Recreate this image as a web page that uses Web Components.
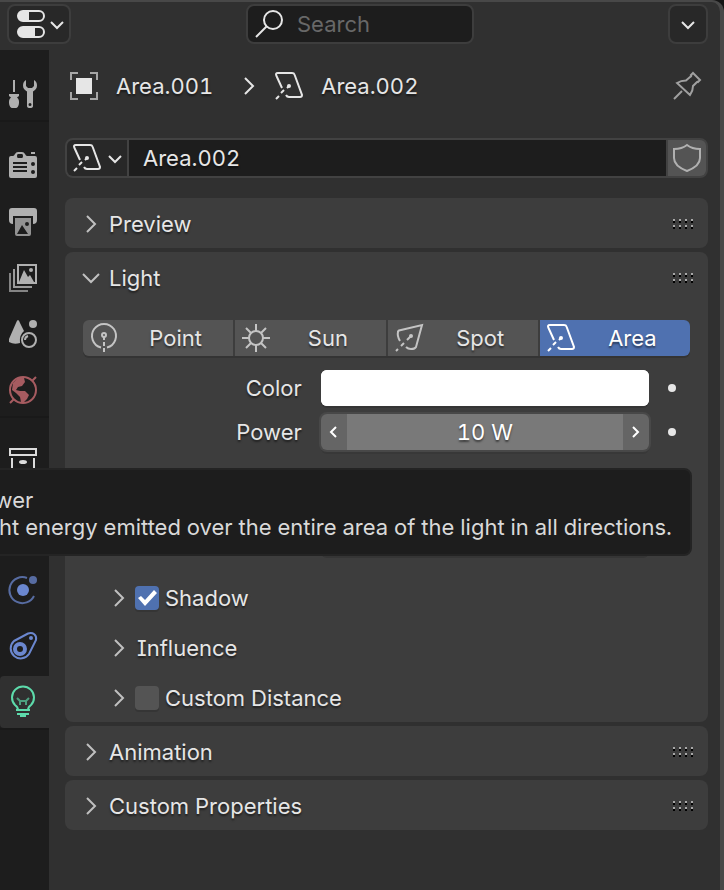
<!DOCTYPE html>
<html lang="en">
<head>
<meta charset="utf-8">
<meta name="viewport" content="width=device-width, initial-scale=1">
<title>Properties</title>
<style>
    :root {
        --back: #303030;
        --dark: #1d1d1d;
        --panel: #3d3d3d;
        --widget: #545454;
        --menu: #282828;
        --text: #e6e6e6;
        --accent: #4f71b0;
    }

    body {
        margin: 0;
        background: #151515;
        color: var(--text);
        font: 22px/28px Inter, "Liberation Sans", sans-serif;
        font-feature-settings: "tnum", "cv08";
        text-shadow: 0 2px 2px rgba(0, 0, 0, 0.5);
    }
</style>
</head>
<body>

<properties-editor>
    <editor-header slot="header"></editor-header>

    <tab-group slot="tabs">
        <editor-tab icon="tool" label="Tool"></editor-tab>
    </tab-group>
    <tab-group slot="tabs">
        <editor-tab icon="render" label="Render"></editor-tab>
        <editor-tab icon="output" label="Output"></editor-tab>
        <editor-tab icon="layers" label="View Layer"></editor-tab>
        <editor-tab icon="scene" label="Scene"></editor-tab>
        <editor-tab icon="world" label="World"></editor-tab>
    </tab-group>
    <tab-group slot="tabs">
        <editor-tab icon="collection" label="Collection"></editor-tab>
    </tab-group>
    <tab-group slot="tabs">
        <editor-tab icon="object" label="Object"></editor-tab>
        <editor-tab icon="physics" label="Physics"></editor-tab>
        <editor-tab icon="constraint" label="Constraints"></editor-tab>
        <editor-tab icon="bulb" label="Data" active></editor-tab>
    </tab-group>

    <context-path></context-path>
    <data-block value="Area.002"></data-block>

    <panel-list>
        <fold-panel heading="Preview"></fold-panel>
        <fold-panel heading="Light" open>
            <light-types>
                <light-type icon="point">Point</light-type>
                <light-type icon="sun">Sun</light-type>
                <light-type icon="spot">Spot</light-type>
                <light-type icon="area" active>Area</light-type>
            </light-types>
            <property-row label="Color" type="color" value="#ffffff"></property-row>
            <property-row label="Power" type="number" value="10 W"></property-row>
            <property-row type="covered"></property-row>
            <sub-panel check="on">Shadow</sub-panel>
            <sub-panel>Influence</sub-panel>
            <sub-panel check="off">Custom Distance</sub-panel>
        </fold-panel>
        <fold-panel heading="Animation"></fold-panel>
        <fold-panel heading="Custom Properties"></fold-panel>
    </panel-list>

    <tool-tip slot="overlay">
        <span slot="name">Power</span>
        Light energy emitted over the entire area of the light in all directions.
    </tool-tip>
</properties-editor>

<script>
// Icons are drawn on a 28px grid with currentColor
const ICONS = {
    editor: `<path d="M6 0h16a6 6 0 0 1 0 12H6A6 6 0 0 1 6 0zM12 2v8h10q4 0 4-4t-4-4z" fill="currentColor" fill-rule="evenodd" stroke="none"/>
        <path d="M6 16h16a6 6 0 0 1 0 12H6a6 6 0 0 1 0-12zM18 18v8h4q4 0 4-4t-4-4z" fill="currentColor" fill-rule="evenodd" stroke="none"/>`,
    search: `<circle cx="18" cy="10" r="9"/><path d="M11.500 16.500L1 27"/>`,
    tool: `<g fill="currentColor" stroke="none"><path d="M4 0h2v12H4zM0 14h10v2l-2 1.500c2 2 2 3 2 5.500 0 3-2 5-3 5H3c-1 0-3-2-3-5 0-2.500 0-3.500 2-5.500L0 16z"/>
        <path fill-rule="evenodd" d="M17 0v6l2 2h4l2-2V0c2 1 3 3 3 5.500 0 3-1.500 4.500-4 6V26q0 2-3 2t-3-2V11.500c-2.500-1.500-4-3-4-6C14 3 15 1 17 0zM21 23a1.500 1.500 0 1 0 0 3 1.500 1.500 0 0 0 0-3z"/></g>`,
    render: `<path fill="currentColor" stroke="none" fill-rule="evenodd" d="M2 4h2q1 0 2-2 1-2 3-2h4q2 0 3 2 1 2 2 2h8q2 0 2 2v18q0 2-2 2H2q-2 0-2-2V6q0-2 2-2zM9 2q-1 0-1 2t1 2h4q1 0 1-2t-1-2zM4 10v2h14v-2zm0 4v2h14v-2zm0 4v2h14v-2zM24 10a2 2 0 1 0 0 4 2 2 0 0 0 0-4zm0 8a2 2 0 1 0 0 4 2 2 0 0 0 0-4zM22 0h4v2h-4z"/>`,
    output: `<path fill="currentColor" stroke="none" d="M3 0h22q3 0 3 3v9q0 4-4 4V8H4v8q-4 0-4-4V3q0-3 3-3z"/>
        <path fill="currentColor" opacity=".8" stroke="none" fill-rule="evenodd" d="M6 10h16v16q0 2-2 2H8q-2 0-2-2zM8 26h11l-6-9zM18 14a2 2 0 1 0 0 4 2 2 0 0 0 0-4z"/>`,
    layers: `<rect x="9" y="1" width="18" height="18"/><path d="M5 5v18h18" opacity=".85"/><path d="M1 9v18h18" opacity=".7"/>
        <path d="M10 18l5-12 4 7 2-2 4 7z" fill="currentColor" stroke="none"/><circle cx="22" cy="6" r="2" fill="currentColor" stroke="none"/>`,
    scene: `<path d="M9 0q1 0 2 3l4 8q-5 4-4 12-6 2-11-1v-3L7 3q1-3 2-3z" fill="currentColor" stroke="none"/>
        <circle cx="24" cy="4" r="4" fill="currentColor" stroke="none"/><circle cx="20" cy="20" r="7"/><path d="M16 20q0-3 3-4"/>`,
    world: `<circle cx="14" cy="14" r="13"/><path d="M23 5l4-4M5 23l-4 4"/>
        <path d="M4 7l5-5h6l1 4-3 4-4 1-2 3 4 1h5l4 4-2 4-3 3h-3l-1-5-4-4-4-3z" fill="currentColor" stroke="none"/>`,
    collection: `<rect x="1" y="1" width="26" height="6"/><path d="M3 10v16h22V10"/><ellipse cx="14" cy="14" rx="4" ry="2" fill="currentColor" stroke="none"/>`,
    object: `<path d="M1 8V1h7M20 1h7v7M27 20v7h-7M8 27H1v-7" opacity=".65"/><path d="M6 6h16v16H6z" fill="currentColor" stroke="none"/>`,
    physics: `<path d="M18 2A13 13 0 1 0 25 20" opacity=".75"/><circle cx="14" cy="14" r="6" fill="currentColor" stroke="none"/><circle cx="24" cy="4" r="4" fill="currentColor" stroke="none" opacity=".75"/>`,
    constraint: `<path d="M5 9L19 1.500C24 0 28 3 27 8L20 22A10 10 0 1 1 5 9z"/><circle cx="11" cy="17" r="5" stroke-width="4"/><circle cx="22" cy="6" r="2" fill="currentColor" stroke="none"/>`,
    bulb: `<path d="M9 22q0-3-3-5a11 11 0 1 1 16 0q-3 2-3 5M7 22h14M8 26h12M11 28h6"/><path d="M8 10l3 3h6l3-3M11 17v-4M17 17v-4" opacity=".65"/>`,
    area: `<path d="M7 16L1.500 4Q0 1 3 1h14q2 0 2.500 1.500L27 23q0 2-2 2H14q-2 0-3-2M6 21l3-3M1 27l3-3M12 16l2-2"/><circle cx="14" cy="14" r="2" fill="currentColor" stroke="none"/>`,
    point: `<path d="M11 23.500a12 12 0 1 1 6 0"/><circle cx="14" cy="11" r="2"/><path d="M14 13v3M14 18v4M14 24v4"/>`,
    sun: `<circle cx="14" cy="14" r="7"/><path d="M14 7V0M14 21v7M7 14H0M21 14h7M9 9L4 4M19 9l5-5M9 19l-5 5M19 19l5 5"/>`,
    spot: `<path d="M5 17Q2 12 3 8q0-1 1-1.500L27 1l-6 22q-1 2-5 2-3 0-5-2M12 16l4-4M6 22l3-3M1 27l2-2"/><circle cx="16" cy="12" r="2" fill="currentColor" stroke="none"/>`,
    pin: `<path d="M20 1l7 7-2 2q-1-.5-2 1l-3 3q0 5-3 9L4 11q4-2.500 9-2.500L17 5q2-1 1-2zM9 19l-8 8"/>`,
    shield: `<path d="M14 1q-5 4-13 4v9q0 8 13 13 13-5 13-13V5Q19 5 14 1z"/>`,
    down: `<path d="M8 12l6 6 6-6"/>`,
    unfold: `<path d="M6 10l8 8 8-8"/>`,
    right: `<path d="M10 6l8 8-8 8"/>`,
    stepleft: `<path d="M16 9l-5 5 5 5"/>`,
    stepright: `<path d="M11 9l5 5-5 5"/>`
};

// Reset shared by every element that has a button in it
const BUTTON = `
    button { margin: 0; padding: 0; border: 0; background: none; color: inherit; font: inherit; font-feature-settings: inherit; text-shadow: inherit; cursor: pointer; }
`;

class UiIcon extends HTMLElement {
    constructor() {
        super();
        this.attachShadow({ mode: 'open' });
    }

    connectedCallback() {
        this.shadowRoot.innerHTML = `
        <style>
            :host { display: block; flex: none; width: 28px; height: 28px; }
            svg { display: block; overflow: visible; }
        </style>
        <svg width="28" height="28" viewBox="0 0 28 28" fill="none" stroke="currentColor" stroke-width="2" aria-hidden="true">${ICONS[this.getAttribute('name')]}</svg>
        `;
    }
}
customElements.define('ui-icon', UiIcon);

// Whole editor: header on top, tabs on the left, panels on the right
class PropertiesEditor extends HTMLElement {
    constructor() {
        super();
        this.attachShadow({ mode: 'open' });
        this.shadowRoot.innerHTML = `
        <style>
            :host {
                box-sizing: border-box;
                position: relative;
                display: flex;
                flex-direction: column;
                min-height: 100vh;
                overflow: hidden;
                background: var(--back);
                border-top: 2px solid #484848;
                border-right: 4px solid #484848;
                border-top-right-radius: 12px;
            }
            .columns { flex: 1; display: flex; }
            nav {
                flex: none;
                width: 49px;
                display: flex;
                flex-direction: column;
                gap: 20px;
                padding-top: 18px;
                box-sizing: border-box;
                background: var(--dark);
            }
            main { flex: 1; min-width: 0; padding: 16px 12px 16px 16px; }
        </style>
        <slot name="header"></slot>
        <div class="columns">
            <nav><slot name="tabs"></slot></nav>
            <main><slot></slot></main>
        </div>
        <slot name="overlay"></slot>
        `;
    }
}
customElements.define('properties-editor', PropertiesEditor);

class EditorHeader extends HTMLElement {
    constructor() {
        super();
        this.attachShadow({ mode: 'open' });
        this.shadowRoot.innerHTML = `
        <style>
            ${BUTTON}
            :host { display: grid; grid-template-columns: 1fr auto 1fr; padding: 2px 0 6px; }
            button, label {
                box-sizing: border-box;
                height: 40px;
                display: flex;
                align-items: center;
                border: 2px solid var(--panel);
                border-radius: 8px;
                background: var(--menu);
            }
            .editor { justify-self: start; width: 64px; margin-left: 7px; padding-left: 8px; }
            .editor ui-icon + ui-icon { margin-left: -2px; }
            .options { justify-self: end; width: 40px; margin-right: 12px; justify-content: center; }
            label { width: 228px; gap: 14px; padding: 0 7px; background: var(--dark); }
            input {
                min-width: 0;
                flex: 1;
                padding: 0;
                border: 0;
                outline: 0;
                background: none;
                color: inherit;
                font: inherit;
                text-shadow: none;
            }
            input::placeholder { color: #686868; opacity: 1; }
        </style>
        <button class="editor" aria-label="Editor type"><ui-icon name="editor"></ui-icon><ui-icon name="down"></ui-icon></button>
        <label><ui-icon name="search"></ui-icon><input type="text" placeholder="Search" aria-label="Search"></label>
        <button class="options" aria-label="Options"><ui-icon name="down"></ui-icon></button>
        `;
    }
}
customElements.define('editor-header', EditorHeader);

class TabGroup extends HTMLElement {
    constructor() {
        super();
        this.attachShadow({ mode: 'open' });
        this.shadowRoot.innerHTML = `
        <style>
            :host { display: flex; flex-direction: column; gap: 4px; box-shadow: 0 2px 0 #191919; }
        </style>
        <slot></slot>
        `;
    }
}
customElements.define('tab-group', TabGroup);

class EditorTab extends HTMLElement {
    constructor() {
        super();
        this.attachShadow({ mode: 'open' });
    }

    connectedCallback() {
        const icon = this.getAttribute('icon');
        this.shadowRoot.innerHTML = `
        <style>
            ${BUTTON}
            :host { display: block; color: #b0b0b0; }
            :host([icon="world"]) { color: #a65b60; }
            :host([icon="collection"]) { color: #dcdcdc; }
            :host([icon="object"]) { color: #e19658; }
            :host([icon="physics"]), :host([icon="constraint"]) { color: #6b87cf; }
            :host([icon="bulb"]) { color: #5ddbab; }
            :host([active]) { background: var(--back); border-radius: 4px 0 0 4px; }
            button { display: flex; align-items: center; width: 100%; height: 52px; padding-left: 9px; }
        </style>
        <button aria-label="${this.getAttribute('label')}"><ui-icon name="${icon}"></ui-icon></button>
        `;
    }
}
customElements.define('editor-tab', EditorTab);

// Row with the object and its light data, and the pin
class ContextPath extends HTMLElement {
    constructor() {
        super();
        this.attachShadow({ mode: 'open' });
        this.shadowRoot.innerHTML = `
        <style>
            ${BUTTON}
            :host { display: flex; align-items: center; height: 40px; padding: 0 7px 0 5px; }
            span { margin-left: 18px; }
            .arrow { margin: 0 12px 0 22px; }
            button { margin-left: auto; color: #a0a0a0; }
        </style>
        <ui-icon name="object"></ui-icon><span>Area.001</span>
        <ui-icon class="arrow" name="right"></ui-icon>
        <ui-icon name="area"></ui-icon><span>Area.002</span>
        <button aria-label="Pin"><ui-icon name="pin"></ui-icon></button>
        `;
    }
}
customElements.define('context-path', ContextPath);

class DataBlock extends HTMLElement {
    constructor() {
        super();
        this.attachShadow({ mode: 'open' });
    }

    connectedCallback() {
        this.shadowRoot.innerHTML = `
        <style>
            ${BUTTON}
            :host {
                box-sizing: border-box;
                display: flex;
                gap: 2px;
                height: 40px;
                margin: 32px 0 20px;
                border: 2px solid #424242;
                border-radius: 8px;
                background: #424242;
                overflow: hidden;
            }
            button { display: flex; align-items: center; justify-content: center; }
            .browse { flex: none; width: 60px; padding-left: 8px; background: var(--menu); }
            .fake { flex: none; width: 38px; background: var(--widget); color: #b0b0b0; }
            input {
                flex: 1;
                min-width: 0;
                padding: 0 14px;
                border: 0;
                outline: 0;
                background: var(--dark);
                color: inherit;
                font: inherit;
                font-feature-settings: inherit;
                text-shadow: inherit;
            }
        </style>
        <button class="browse" aria-label="Browse data"><ui-icon name="area"></ui-icon><ui-icon name="down"></ui-icon></button>
        <input type="text" value="${this.getAttribute('value')}" aria-label="Name">
        <button class="fake" aria-label="Fake user"><ui-icon name="shield"></ui-icon></button>
        `;
    }
}
customElements.define('data-block', DataBlock);

class PanelList extends HTMLElement {
    constructor() {
        super();
        this.attachShadow({ mode: 'open' });
        this.shadowRoot.innerHTML = `
        <style>
            :host { display: flex; flex-direction: column; gap: 4px; }
        </style>
        <slot></slot>
        `;
    }
}
customElements.define('panel-list', PanelList);

class FoldPanel extends HTMLElement {
    constructor() {
        super();
        this.attachShadow({ mode: 'open' });
    }

    connectedCallback() {
        const open = this.hasAttribute('open');
        this.shadowRoot.innerHTML = `
        <style>
            ${BUTTON}
            :host { display: block; border-radius: 8px; background: var(--panel); }
            button { display: flex; align-items: center; gap: 4px; width: 100%; height: 50px; padding: 2px 13px 0 12px; text-align: left; }
            ui-icon { color: #c0c0c0; }
            span { flex: 1; }
            .body { padding: 18px 18px 0; }
        </style>
        <button aria-expanded="${open}">
            <ui-icon name="${open ? 'unfold' : 'right'}"></ui-icon>
            <span>${this.getAttribute('heading')}</span>
            <drag-dots></drag-dots>
        </button>
        ${open ? '<div class="body"><slot></slot></div>' : ''}
        `;
    }
}
customElements.define('fold-panel', FoldPanel);

// Grip of a panel, light dots with a black shadow under each
class DragDots extends HTMLElement {
    constructor() {
        super();
        this.attachShadow({ mode: 'open' });
        this.shadowRoot.innerHTML = `
        <style>
            :host { display: block; width: 22px; height: 10px; }
            svg { display: block; }
        </style>
        <svg width="22" height="10" viewBox="0 0 22 10" fill="none" stroke-width="2" stroke-dasharray="2 4" aria-hidden="true">
            <path d="M0 1h22M0 7h22" stroke="#a8a8a8"/>
            <path d="M0 3h22M0 9h22" stroke="#000"/>
        </svg>
        `;
    }
}
customElements.define('drag-dots', DragDots);

class LightTypes extends HTMLElement {
    constructor() {
        super();
        this.attachShadow({ mode: 'open' });
        this.shadowRoot.innerHTML = `
        <style>
            :host {
                display: grid;
                grid-template-columns: repeat(4, 1fr);
                gap: 2px;
                margin-bottom: 14px;
                border-radius: 6px;
                overflow: hidden;
                box-shadow: 0 2px 0 #343434;
            }
        </style>
        <slot></slot>
        `;
    }
}
customElements.define('light-types', LightTypes);

class LightType extends HTMLElement {
    constructor() {
        super();
        this.attachShadow({ mode: 'open' });
    }

    connectedCallback() {
        this.shadowRoot.innerHTML = `
        <style>
            ${BUTTON}
            :host { display: block; background: var(--widget); }
            :host([active]) { background: var(--accent); color: #fff; }
            button { display: flex; align-items: center; width: 100%; height: 36px; padding-left: 7px; }
            span { flex: 1; text-align: center; }
            ui-icon { color: #c4c4c4; }
            :host([active]) ui-icon { color: #fff; }
        </style>
        <button aria-pressed="${this.hasAttribute('active')}">
            <ui-icon name="${this.getAttribute('icon')}"></ui-icon><span><slot></slot></span>
        </button>
        `;
    }
}
customElements.define('light-type', LightType);

// Label, field and keyframe dot
class PropertyRow extends HTMLElement {
    constructor() {
        super();
        this.attachShadow({ mode: 'open' });
    }

    field() {
        const value = this.getAttribute('value');
        switch (this.getAttribute('type')) {
            case 'color':
                return `<input id="field" class="color" type="color" value="${value}">`;
            case 'number':
                return `<div class="number">
                    <button aria-label="Decrease"><ui-icon name="stepleft"></ui-icon></button>
                    <input id="field" type="text" value="${value}">
                    <button aria-label="Increase"><ui-icon name="stepright"></ui-icon></button>
                </div>`;
            default:
                return '<div class="plain"></div>';
        }
    }

    connectedCallback() {
        const label = this.getAttribute('label');
        this.shadowRoot.innerHTML = `
        <style>
            ${BUTTON}
            :host {
                display: grid;
                grid-template-columns: minmax(0, 2fr) minmax(0, 3fr) 22px;
                align-items: center;
                column-gap: 19px;
                margin-bottom: 8px;
            }
            :host([type="covered"]) { margin: 70px 0 16px; }
            label { text-align: right; }
            .color, .plain, .number { box-sizing: border-box; width: 100%; height: 36px; border-radius: 6px; box-shadow: 0 2px 0 #353535; }
            .color { display: block; margin: 0; padding: 0; border: 0; background: #fff; overflow: hidden; }
            .color::-webkit-color-swatch-wrapper { padding: 0; }
            .color::-webkit-color-swatch { border: 0; }
            .plain { background: var(--widget); }
            .number { display: flex; overflow: hidden; background: #656565; box-shadow: 0 0 0 2px #484848, 0 4px 0 #383838; color: #fff; }
            .number button { flex: none; display: flex; align-items: center; justify-content: center; width: 26px; }
            .number input {
                flex: 1;
                min-width: 0;
                padding: 0;
                border: 0;
                outline: 0;
                background: #797979;
                color: inherit;
                font: inherit;
                font-feature-settings: inherit;
                text-align: center;
                text-shadow: inherit;
            }
            i { justify-self: start; width: 8px; height: 8px; border-radius: 50%; background: var(--text); }
        </style>
        ${label ? `<label for="field">${label}</label>` : '<span></span>'}
        ${this.field()}
        ${label ? '<i></i>' : ''}
        `;
    }
}
customElements.define('property-row', PropertyRow);

class SubPanel extends HTMLElement {
    constructor() {
        super();
        this.attachShadow({ mode: 'open' });
    }

    connectedCallback() {
        const check = this.getAttribute('check');
        this.shadowRoot.innerHTML = `
        <style>
            ${BUTTON}
            :host { box-sizing: border-box; display: flex; align-items: center; gap: 2px; height: 50px; padding: 2px 0 0 22px; }
            button { display: flex; align-items: center; gap: 4px; }
            ui-icon { color: #c0c0c0; }
            label { display: flex; align-items: center; gap: 6px; }
            input {
                appearance: none;
                display: grid;
                width: 24px;
                height: 24px;
                margin: 0;
                border-radius: 4px;
                background: var(--widget);
                box-shadow: 0 2px 0 #353535;
            }
            input:checked { background: var(--accent); }
            input:checked::before {
                content: "";
                background: #fff;
                clip-path: polygon(3px 12px, 6px 10px, 10px 14px, 19px 4px, 22px 7px, 10px 20px);
            }
        </style>
        ${check
            ? `<button aria-label="Expand"><ui-icon name="right"></ui-icon></button>
               <label><input type="checkbox" ${check === 'on' ? 'checked' : ''}><slot></slot></label>`
            : '<button><ui-icon name="right"></ui-icon><slot></slot></button>'}
        `;
    }
}
customElements.define('sub-panel', SubPanel);

// Floats over the editor and runs off its left edge
class ToolTip extends HTMLElement {
    constructor() {
        super();
        this.attachShadow({ mode: 'open' });
        this.shadowRoot.innerHTML = `
        <style>
            :host {
                box-sizing: border-box;
                position: absolute;
                top: 466px;
                right: 28px;
                padding: 17px 18px 13px;
                border: 2px solid #242424;
                border-radius: 8px;
                background: var(--dark);
                color: #d9d9d9;
                line-height: 27px;
                white-space: nowrap;
                text-shadow: none;
            }
            p { margin: 0; }
        </style>
        <p><slot name="name"></slot></p>
        <p><slot></slot></p>
        `;
    }
}
customElements.define('tool-tip', ToolTip);
</script>
</body>
</html>
